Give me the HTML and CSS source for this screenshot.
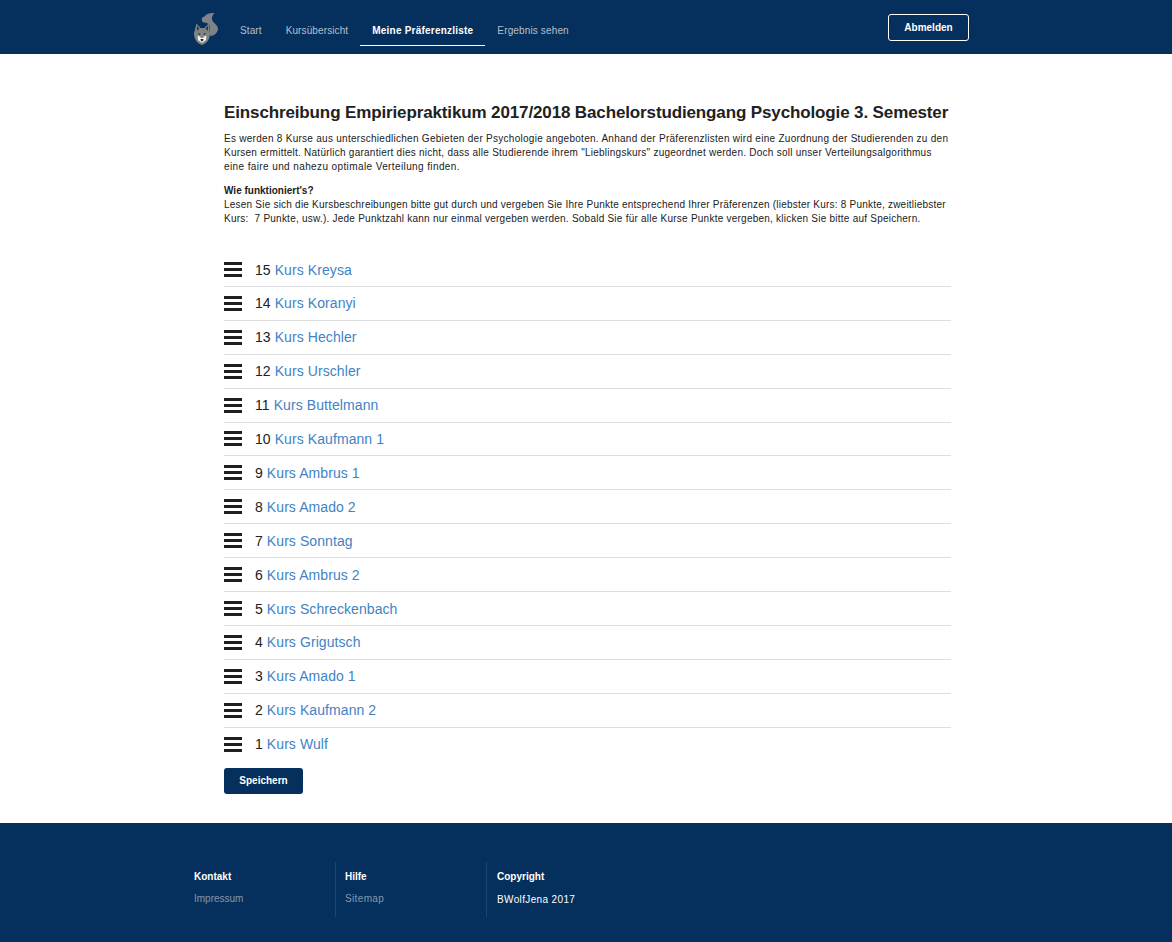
FILE: index.html
```html
<!DOCTYPE html>
<html lang="de">
<head>
<meta charset="utf-8">
<title>Meine Präferenzliste</title>
<link rel="stylesheet" href="styles.css">
</head>
<body>
<header class="topbar">
  <div class="bar-inner">
    <svg class="logo" viewBox="0 0 26 34" width="26" height="34">
      <path fill="#808386" d="M20.500 1C16 .5 12 2 10.500 4.500 7.500 5 7 8 9 10.500c2.500 0 5 .5 6.300 2.500.8 3-.3 7 1.200 11 3.500 0 7-3 7.500-7 .2-4-5.500-6.500-6-9.500C17.500 5 19 2.500 20.500 1Z"/>
      <path fill="#808386" d="M2.500 11.500l4 4.500h4l4-4.500c1 3 .5 6 1.500 9.500 0 6-3 10.500-8 12-5-1.500-8-6-8-12 1-3.500 1.500-6 2.500-9.500Z"/>
      <path fill="#2f3133" d="M3 13.500l2.300 3.200-2.300 2Zm11 0-2.300 3.200 2.300 2Z"/>
      <path fill="#f4f4f4" d="M3.700 23.500l2.800 1.500.5-1h2l.5 1 2.800-1.500-.3 4.500-3.500 2.500h-1L4 28Z"/>
      <path fill="#85878a" d="M7 20h2l.6 6H6.400Z"/>
      <path fill="#222" d="M3.700 21l3 .7-.8 1.200Zm8.600 0-3 .7.800 1.200ZM6.600 27h2.800v1.300L8 29.500l-1.400-1.200Z"/>
    </svg>
    <nav class="menu">
      <a class="item">Start</a>
      <a class="item">Kursübersicht</a>
      <a class="item active">Meine Präferenzliste</a>
      <a class="item">Ergebnis sehen</a>
    </nav>
    <a class="logout">Abmelden</a>
  </div>
</header>
<main class="content">
  <h1>Einschreibung Empiriepraktikum 2017/2018 Bachelorstudiengang Psychologie 3. Semester</h1>
  <p><span class="l1">Es werden 8 Kurse aus unterschiedlichen Gebieten der Psychologie angeboten. Anhand der Präferenzlisten wird eine Zuordnung der Studierenden zu den</span><br>
  <span class="l2">Kursen ermittelt. Natürlich garantiert dies nicht, dass alle Studierende ihrem "Lieblingskurs" zugeordnet werden. Doch soll unser Verteilungsalgorithmus</span><br>
  <span class="l3">eine faire und nahezu optimale Verteilung finden.</span></p>
  <p><b>Wie funktioniert's?</b><br>
  <span class="l4">Lesen Sie sich die Kursbeschreibungen bitte gut durch und vergeben Sie Ihre Punkte entsprechend Ihrer Präferenzen (liebster Kurs: 8 Punkte, zweitliebster</span><br>
  <span class="l5">Kurs: &nbsp;7 Punkte, usw.). Jede Punktzahl kann nur einmal vergeben werden. Sobald Sie für alle Kurse Punkte vergeben, klicken Sie bitte auf Speichern.</span></p>
  <ul class="courses">
    <li><i class="grip"></i><span>15 <a>Kurs Kreysa</a></span></li>
    <li><i class="grip"></i><span>14 <a>Kurs Koranyi</a></span></li>
    <li><i class="grip"></i><span>13 <a>Kurs Hechler</a></span></li>
    <li><i class="grip"></i><span>12 <a>Kurs Urschler</a></span></li>
    <li><i class="grip"></i><span>11 <a>Kurs Buttelmann</a></span></li>
    <li><i class="grip"></i><span>10 <a>Kurs Kaufmann 1</a></span></li>
    <li><i class="grip"></i><span>9 <a>Kurs Ambrus 1</a></span></li>
    <li><i class="grip"></i><span>8 <a>Kurs Amado 2</a></span></li>
    <li><i class="grip"></i><span>7 <a>Kurs Sonntag</a></span></li>
    <li><i class="grip"></i><span>6 <a>Kurs Ambrus 2</a></span></li>
    <li><i class="grip"></i><span>5 <a>Kurs Schreckenbach</a></span></li>
    <li><i class="grip"></i><span>4 <a>Kurs Grigutsch</a></span></li>
    <li><i class="grip"></i><span>3 <a>Kurs Amado 1</a></span></li>
    <li><i class="grip"></i><span>2 <a>Kurs Kaufmann 2</a></span></li>
    <li><i class="grip"></i><span>1 <a>Kurs Wulf</a></span></li>
  </ul>
  <button class="save">Speichern</button>
</main>
<footer class="footer">
  <div class="columns">
    <section class="col"><h4>Kontakt</h4><a>Impressum</a></section>
    <section class="col"><h4>Hilfe</h4><a class="loose">Sitemap</a></section>
    <section class="col wide"><h4>Copyright</h4><p class="loose">BWolfJena 2017</p></section>
  </div>
</footer>
</body>
</html>
```

FILE: styles.css
```css
* { box-sizing: border-box; }
body { margin: 0; height: 942px; display: flex; flex-direction: column; overflow: hidden; font: 10px/14px "Liberation Sans", Arial, sans-serif; color: #212121; background: #fff; }
.topbar { height: 54px; background: #052f5c; }
.bar-inner { width: 784px; margin-left: 194px; display: flex; align-items: flex-start; }
.logo { margin: 12px 8px 0 0; width: 26px; }
.menu { display: flex; padding-top: 16px; }
.item { height: 30px; padding: 8px 12px 0; color: rgba(255,255,255,.7); border-bottom: 1px solid transparent; white-space: nowrap; letter-spacing: .11px; }
.item:last-child { letter-spacing: .14px; }
.item.active { color: #fff; font-weight: bold; border-color: #fff; letter-spacing: .22px; }
.logout { margin: 14px 9px 0 auto; width: 81px; height: 27px; border: 1px solid #fff; border-radius: 3px; color: #fff; font-weight: bold; line-height: 26px; text-align: center; }
.content { width: 728px; margin-left: 224px; height: 769px; padding-top: 48px; }
h1 { margin: 0 0 8px; font-size: 17px; line-height: 22px; letter-spacing: -.13px; white-space: nowrap; }
p { margin: 0 0 10px; white-space: nowrap; }
.l1 { letter-spacing: .277px; }
.l2 { letter-spacing: .25px; }
.l3 { letter-spacing: .39px; }
.l4 { letter-spacing: .22px; }
.l5 { letter-spacing: .238px; }
.courses { list-style: none; margin: 0; padding: 17px 0 0; width: 727px; font-size: 14px; letter-spacing: .08px; }
.courses li { height: 33.920px; display: flex; align-items: center; border-bottom: 1px solid #dcddde; }
.courses li:first-child span { padding-top: 1px; }
.courses li:last-child { border-bottom-color: transparent; }
.courses a { color: #4183c4; }
.grip { width: 18px; height: 15px; margin-right: 13px; border-top: 3px solid #1f1f1f; border-bottom: 3px solid #1f1f1f; background: linear-gradient(#1f1f1f, #1f1f1f) 0 3px / 100% 3px no-repeat; }
.save { display: block; width: 79px; height: 26px; margin-top: 6px; padding: 0; border: 0; border-radius: 3px; background: #052f5c; color: #fff; font: bold 10px/26px "Liberation Sans", Arial, sans-serif; }
.footer { height: 119px; padding: 39px 0 0 194px; background: #052f5c; color: #fff; }
.columns { display: flex; }
.col { width: 151px; height: 55px; padding: 8px 0 0 9px; border-right: 1px solid #1f446d; }
.col:first-child { width: 142px; padding-left: 0; }
.col.wide { padding-left: 10px; border: 0; }
.col h4 { margin: 0 0 8px; font-size: 10px; }
.col a { color: rgba(255,255,255,.5); }
.col p { margin: 9px 0 0; }
.loose { letter-spacing: .36px; }
```
